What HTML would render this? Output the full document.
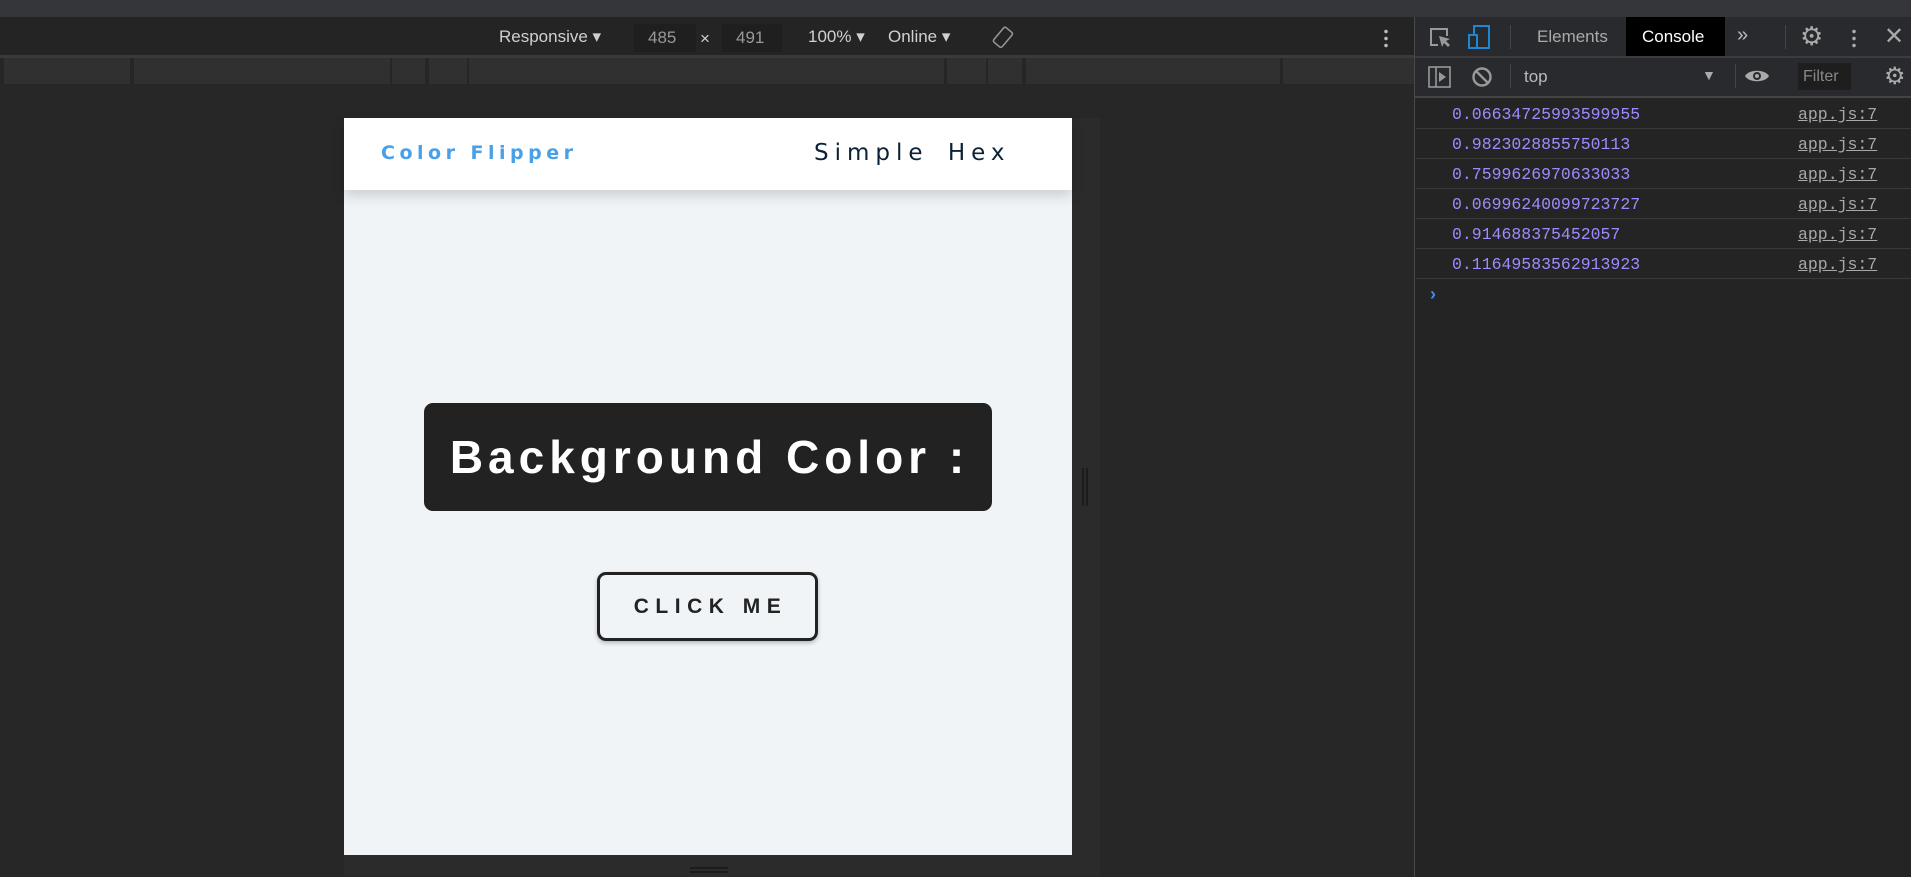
<!DOCTYPE html>
<html><head><meta charset="utf-8"><style>
*{margin:0;padding:0;box-sizing:border-box}
body{width:1911px;height:877px;background:#272727;position:relative;overflow:hidden;font-family:"Liberation Sans",sans-serif}
.a{position:absolute}
.t{color:#d0d0d0;font-size:17px;white-space:nowrap}
.seg{position:absolute;top:58px;height:26px;background:#303030}
.row{position:absolute;left:1416px;width:495px;height:30px;border-bottom:1px solid #3a3a3a}
.row .v{position:absolute;left:36px;top:6px;font-family:"Liberation Mono",monospace;font-size:16.5px;color:#9d8cff}
.row .s{position:absolute;left:382px;top:6px;font-family:"Liberation Mono",monospace;font-size:16.5px;color:#a8a8a8;text-decoration:underline}
</style></head><body>
<div class="a" style="left:0;top:0;width:1911px;height:17px;background:#35363a"></div>
<div class="a" style="left:0;top:17px;width:1415px;height:38px;background:#242424"></div>
<div class="a" style="left:0;top:55px;width:1415px;height:3px;background:#3a3a3a"></div>
<div class="a" style="left:0;top:58px;width:1415px;height:27px;background:#262626"></div>
<div class="seg" style="left:4px;width:126px"></div><div class="seg" style="left:134px;width:256px"></div>
<div class="seg" style="left:392px;width:33px"></div><div class="seg" style="left:429px;width:38px"></div>
<div class="seg" style="left:469px;width:475px"></div><div class="seg" style="left:947px;width:39px"></div>
<div class="seg" style="left:988px;width:34px"></div><div class="seg" style="left:1026px;width:254px"></div>
<div class="seg" style="left:1283px;width:131px"></div>
<div class="a t" style="left:499px;top:27px">Responsive ▾</div>
<div class="a" style="left:634px;top:24px;width:62px;height:28px;background:#1f1f1f"></div>
<div class="a" style="left:722px;top:24px;width:60px;height:28px;background:#1f1f1f"></div>
<div class="a t" style="left:648px;top:28px;color:#999">485</div>
<div class="a t" style="left:700px;top:29px">×</div>
<div class="a t" style="left:736px;top:28px;color:#999">491</div>
<div class="a t" style="left:808px;top:27px">100% ▾</div>
<div class="a t" style="left:888px;top:27px">Online ▾</div>
<svg class="a" style="left:990px;top:25px" width="26" height="26" viewBox="0 0 26 26"><rect x="7" y="3" width="11" height="19" rx="2" transform="rotate(40 13 13)" fill="none" stroke="#999" stroke-width="1.5"/></svg>
<div class="a" style="left:1384px;top:28px;width:4px;height:20px;background:radial-gradient(circle,#bbb 1.6px,transparent 2px) 0 0/4px 7px"></div>
<div class="a" style="left:344px;top:118px;width:756px;height:759px;background:#2b2b2b"></div>
<div class="a" style="left:1082px;top:468px;width:6px;height:38px;border-left:2px solid #1c1c1c;border-right:2px solid #1c1c1c"></div>
<div class="a" style="left:690px;top:867px;width:38px;height:6px;border-top:2px solid #1c1c1c;border-bottom:2px solid #1c1c1c"></div>
<div class="a" style="left:344px;top:118px;width:728px;height:737px;background:#f0f4f7"></div>
<div class="a" style="left:344px;top:118px;width:728px;height:72px;background:#fff;box-shadow:0 6px 12px rgba(0,0,0,.15)"></div>
<div class="a" style="left:381px;top:142px;font-size:19px;font-weight:bold;color:#49a0e8;letter-spacing:4.5px;font-family:'DejaVu Sans',sans-serif">Color Flipper</div>
<div class="a" style="left:814px;top:140px;font-size:23px;color:#0b2236;letter-spacing:6px;font-family:'DejaVu Sans',sans-serif;word-spacing:6px">Simple Hex</div>
<div class="a" style="left:424px;top:403px;width:568px;height:108px;background:#222;border-radius:9px;color:#fff;font-size:46px;font-weight:bold;letter-spacing:5px;text-align:center;line-height:108px;padding-left:3px">Background Color :</div>
<div class="a" style="left:597px;top:572px;width:221px;height:69px;border:3px solid #222;border-radius:9px;color:#222;font-size:21px;font-weight:bold;letter-spacing:6.5px;text-align:center;line-height:63px;padding-left:6px;box-shadow:0 2px 4px rgba(0,0,0,.25)">CLICK ME</div>
<div class="a" style="left:1414px;top:17px;width:1px;height:860px;background:#494949"></div>
<div class="a" style="left:1415px;top:17px;width:496px;height:39px;background:#292a2d"></div>
<div class="a" style="left:1415px;top:56px;width:496px;height:2px;background:#3c3c3c"></div>
<div class="a" style="left:1415px;top:58px;width:496px;height:38px;background:#292a2d"></div>
<div class="a" style="left:1415px;top:96px;width:496px;height:2px;background:#444"></div>
<div class="a" style="left:1415px;top:98px;width:496px;height:779px;background:#242424"></div>
<svg class="a" style="left:1428px;top:25px" width="26" height="24"><path d="M10 20H3V4h16v7" fill="none" stroke="#999" stroke-width="2"/><path d="M11 11l3 11 2-4 4 4 2-2-4-4 4-2z" fill="#999"/></svg>
<svg class="a" style="left:1468px;top:24px" width="24" height="26"><rect x="6" y="2" width="15" height="22" fill="none" stroke="#1a88d4" stroke-width="2"/><rect x="1" y="11" width="8" height="13" fill="#292a2d" stroke="#1a88d4" stroke-width="2"/></svg>
<div class="a" style="left:1510px;top:25px;width:1px;height:24px;background:#444"></div>
<div class="a t" style="left:1537px;top:27px;color:#aaa">Elements</div>
<div class="a" style="left:1626px;top:17px;width:99px;height:39px;background:#000"></div>
<div class="a t" style="left:1642px;top:27px;color:#fff">Console</div>
<div class="a t" style="left:1737px;top:24px;color:#bbb;font-size:20px">»</div>
<div class="a" style="left:1785px;top:25px;width:1px;height:24px;background:#444"></div>
<div class="a" style="left:1800px;top:22px;color:#aaa;font-size:26px;font-family:'DejaVu Sans'">⚙</div>
<div class="a" style="left:1852px;top:28px;width:4px;height:20px;background:radial-gradient(circle,#aaa 1.6px,transparent 2px) 0 0/4px 7px"></div>
<div class="a" style="left:1884px;top:22px;color:#aaa;font-size:24px">✕</div>
<svg class="a" style="left:1428px;top:66px" width="24" height="22"><rect x="1" y="1" width="21" height="20" fill="none" stroke="#999" stroke-width="1.6"/><line x1="8" y1="1" x2="8" y2="21" stroke="#999" stroke-width="1.6"/><path d="M11 6l7 5-7 5z" fill="#999"/></svg>
<svg class="a" style="left:1471px;top:66px" width="22" height="22"><circle cx="11" cy="11" r="8.5" fill="none" stroke="#999" stroke-width="2.4"/><line x1="5" y1="5" x2="17" y2="17" stroke="#999" stroke-width="2.4"/></svg>
<div class="a" style="left:1510px;top:64px;width:1px;height:24px;background:#444"></div>
<div class="a t" style="left:1524px;top:67px;color:#bbb">top</div>
<div class="a t" style="left:1702px;top:67px;color:#aaa;font-size:14px">▼</div>
<div class="a" style="left:1735px;top:64px;width:1px;height:24px;background:#444"></div>
<svg class="a" style="left:1744px;top:67px" width="26" height="18"><path d="M1 9C5 2 21 2 25 9C21 16 5 16 1 9z" fill="#aaa"/><circle cx="13" cy="9" r="4" fill="#292a2d"/><circle cx="13" cy="9" r="2" fill="#aaa"/></svg>
<div class="a" style="left:1798px;top:63px;width:53px;height:27px;background:#1e1e1e"></div>
<div class="a t" style="left:1803px;top:68px;color:#888;font-size:16px">Filter</div>
<div class="a" style="left:1884px;top:62px;color:#aaa;font-size:24px;font-family:'DejaVu Sans'">⚙</div>
<div class="row" style="top:99px"><span class="v">0.06634725993599955</span><span class="s">app.js:7</span></div>
<div class="row" style="top:129px"><span class="v">0.9823028855750113</span><span class="s">app.js:7</span></div>
<div class="row" style="top:159px"><span class="v">0.7599626970633033</span><span class="s">app.js:7</span></div>
<div class="row" style="top:189px"><span class="v">0.06996240099723727</span><span class="s">app.js:7</span></div>
<div class="row" style="top:219px"><span class="v">0.914688375452057</span><span class="s">app.js:7</span></div>
<div class="row" style="top:249px"><span class="v">0.11649583562913923</span><span class="s">app.js:7</span></div>
<div class="a" style="left:1430px;top:284px;color:#3d8ef0;font-size:18px;font-weight:bold">›</div>
</body></html>
